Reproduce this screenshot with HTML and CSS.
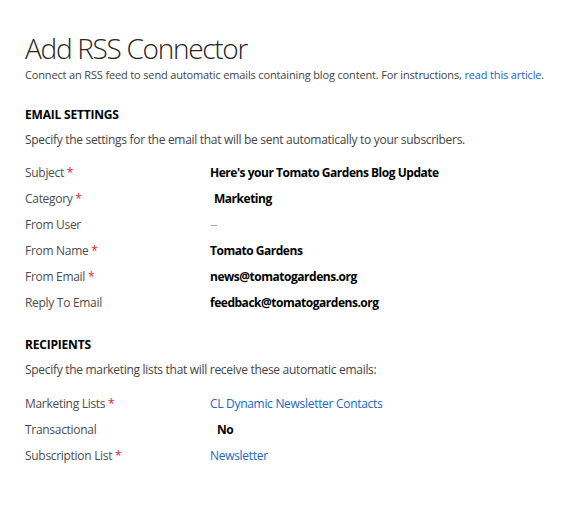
FILE: index.html
```html
<!DOCTYPE html>
<html>
<head>
<meta charset="utf-8">
<link rel="stylesheet" href="styles.css">
</head>
<body>
<div class="page">
  <h1 class="title">Add RSS Connector</h1>
  <p class="intro">Connect an RSS feed to send automatic emails containing blog content. For instructions, <a class="link" href="#">read this article</a>.</p>

  <section class="section">
    <h2 class="section-title">EMAIL SETTINGS</h2>
    <p class="section-desc">Specify the settings for the email that will be sent automatically to your subscribers.</p>
    <div class="fields">
      <div class="label">Subject <span class="req">*</span></div><div class="value strong">Here's your Tomato Gardens Blog Update</div>
      <div class="label">Category <span class="req">*</span></div><div class="value strong indent">Marketing</div>
      <div class="label">From User</div><div class="value empty">--</div>
      <div class="label">From Name <span class="req">*</span></div><div class="value strong">Tomato Gardens</div>
      <div class="label">From Email <span class="req">*</span></div><div class="value strong">news@tomatogardens.org</div>
      <div class="label">Reply To Email</div><div class="value strong">feedback@tomatogardens.org</div>
    </div>
  </section>

  <section class="section recipients">
    <h2 class="section-title">RECIPIENTS</h2>
    <p class="section-desc">Specify the marketing lists that will receive these automatic emails:</p>
    <div class="fields">
      <div class="label">Marketing Lists <span class="req">*</span></div><div class="value"><a class="link" href="#">CL Dynamic Newsletter Contacts</a></div>
      <div class="label">Transactional</div><div class="value strong indent2">No</div>
      <div class="label">Subscription List <span class="req">*</span></div><div class="value"><a class="link" href="#">Newsletter</a></div>
    </div>
  </section>
</div>
</body>
</html>
```

FILE: styles.css
```css
html, body {
  margin: 0;
  padding: 0;
  background: #ffffff;
}
body {
  font-family: "Open Sans", "Noto Sans", "Liberation Sans", sans-serif;
  color: #444444;
}
.page {
  padding: 29px 25px 0 25px;
}
.title {
  margin: 0;
  font-size: 28px;
  font-weight: 300;
  line-height: 38px;
  color: #262626;
  letter-spacing: -1.3px;
}
.intro {
  margin: 0;
  font-size: 11px;
  line-height: 16px;
  color: #444444;
  letter-spacing: -0.15px;
  white-space: nowrap;
}
.link {
  color: #2266c0;
  text-decoration: none;
}
.section {
  margin-top: 24px;
}
.section.recipients {
  margin-top: 22px;
}
.section-title {
  margin: 0;
  font-size: 12px;
  font-weight: 700;
  line-height: 16px;
  color: #000000;
  letter-spacing: -0.2px;
}
.section-desc {
  margin: 9px 0 0 0;
  font-size: 12px;
  line-height: 16px;
  letter-spacing: -0.3px;
}
.fields {
  margin-top: 11px;
  display: grid;
  grid-template-columns: 185px 1fr;
  grid-auto-rows: 26px;
  align-items: center;
  font-size: 12px;
}
.recipients .fields {
  margin-top: 12px;
}
.label {
  letter-spacing: -0.3px;
  color: #4d4d4d;
}
.req {
  color: #e8202a;
}
.value {
  letter-spacing: -0.3px;
}
.strong {
  font-weight: 700;
  color: #000000;
  letter-spacing: -0.48px;
}
.indent {
  padding-left: 4px;
}
.indent2 {
  padding-left: 7px;
}
.empty {
  color: #9aa6b8;
}
```
